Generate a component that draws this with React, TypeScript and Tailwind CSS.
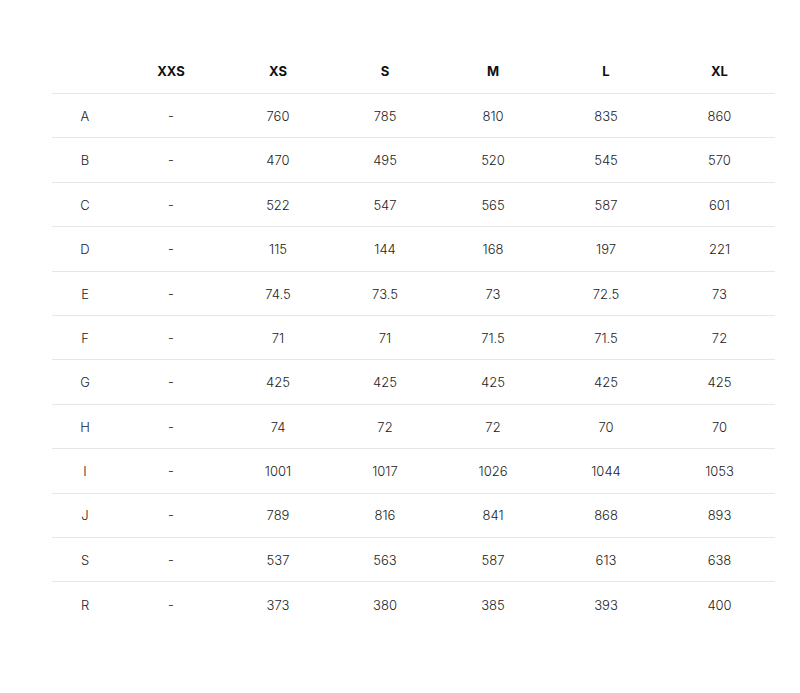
const sizes = ["XXS", "XS", "S", "M", "L", "XL"];

const rows: [string, string[]][] = [
  ["A", ["-", "760", "785", "810", "835", "860"]],
  ["B", ["-", "470", "495", "520", "545", "570"]],
  ["C", ["-", "522", "547", "565", "587", "601"]],
  ["D", ["-", "115", "144", "168", "197", "221"]],
  ["E", ["-", "74.5", "73.5", "73", "72.5", "73"]],
  ["F", ["-", "71", "71", "71.5", "71.5", "72"]],
  ["G", ["-", "425", "425", "425", "425", "425"]],
  ["H", ["-", "74", "72", "72", "70", "70"]],
  ["I", ["-", "1001", "1017", "1026", "1044", "1053"]],
  ["J", ["-", "789", "816", "841", "868", "893"]],
  ["S", ["-", "537", "563", "587", "613", "638"]],
  ["R", ["-", "373", "380", "385", "393", "400"]],
];

const cols = "grid grid-cols-[66px_106px_108px_106px_110px_116px_111px]";

export default function App() {
  return (
    <div className="w-[800px] h-[693px] bg-white pt-[50px] pl-[52px] font-['Inter',sans-serif]">
      <div className="w-[723px]">
        {/* header */}
        <div className={`${cols} h-[44px] items-center border-b border-[#e6e6e6] text-[13px] font-bold text-[#111]`}>
          <div />
          {sizes.map((s) => (
            <div key={s} className="text-center">
              {s}
            </div>
          ))}
        </div>

        {rows.map(([label, vals], i) => (
          <div
            key={label}
            className={`${cols} h-[44.4px] items-center pt-[2px] text-[13px] font-light text-[#222] ${
              i < rows.length - 1 ? "border-b border-[#e6e6e6]" : ""
            }`}
          >
            <div className="text-center">{label}</div>
            {vals.map((v, j) => (
              <div key={j} className="text-center">
                {v}
              </div>
            ))}
          </div>
        ))}
      </div>
    </div>
  );
}
